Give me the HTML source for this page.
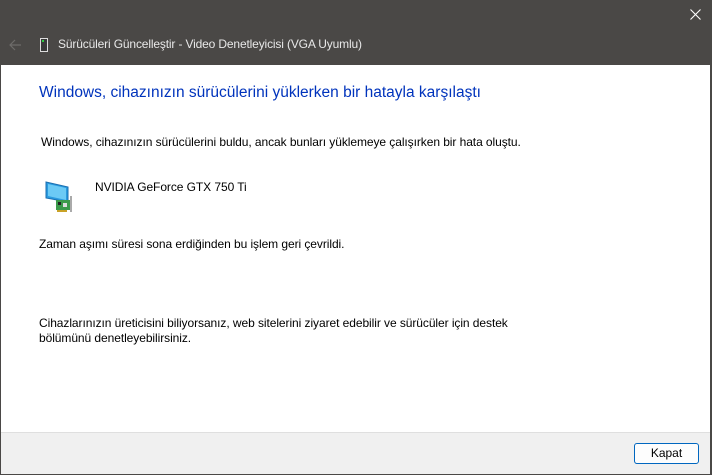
<!DOCTYPE html>
<html><head><meta charset="utf-8"><style>
*{margin:0;padding:0;box-sizing:border-box}
body{width:712px;height:475px;background:#4a4846;position:relative;overflow:hidden;font-family:"Segoe UI","Liberation Sans",sans-serif;font-size:12px;color:#000}
.t{position:absolute;white-space:nowrap;letter-spacing:-0.07px}
#content{position:absolute;left:1px;top:65px;width:709px;height:367px;background:#fff}
#footer{position:absolute;left:1px;top:432px;width:709px;height:42px;background:#f0f0f0;border-top:1px solid #dfdfdf}
#btn{position:absolute;left:634px;top:443px;width:65px;height:21px;border:1px solid #0067c0;border-radius:3px;background:#fdfdfd;text-align:center;line-height:19px;font-size:12px}
</style></head><body>
<svg class="t" style="left:8px;top:38px" width="14" height="14" viewBox="0 0 14 14"><path d="M13 7H2M7 2L2 7l5 5" stroke="#6e6c6a" stroke-width="1.2" fill="none"/></svg>
<svg class="t" style="left:40px;top:38px" width="9" height="14" viewBox="0 0 9 14"><rect x="0.5" y="0.5" width="7" height="13" fill="#3a3a3a" stroke="#ddd"/><rect x="2" y="2" width="2" height="2" fill="#2ecc40"/></svg>
<div class="t" style="left:58px;top:37px;color:#e8e8e8;font-size:12px;letter-spacing:-0.15px">Sürücüleri Güncelleştir - Video Denetleyicisi (VGA Uyumlu)</div>
<svg class="t" style="left:690px;top:9px" width="11" height="11" viewBox="0 0 11 11"><path d="M0.5 0.5l10 10M10.5 0.5l-10 10" stroke="#fff" stroke-width="1.1"/></svg>
<div id="content"></div>
<div class="t" style="left:39px;top:84px;color:#0033bc;font-size:15.5px;letter-spacing:0">Windows, cihazınızın sürücülerini yüklerken bir hatayla karşılaştı</div>
<div class="t" style="left:41px;top:135px">Windows, cihazınızın sürücülerini buldu, ancak bunları yüklemeye çalışırken bir hata oluştu.</div>
<svg class="t" style="left:44px;top:178px" width="30" height="36" viewBox="0 0 30 36"><polygon points="2,4 24,9 24,24 2,20" fill="#2a9be0" stroke="#1b6fb0"/><polygon points="4,6 22,10 22,22 4,18" fill="#6ccaf5"/><rect x="12" y="22" width="14" height="10" fill="#3b9a4a"/><rect x="14" y="24" width="3" height="3" fill="#222"/><rect x="19" y="25" width="4" height="4" fill="#ddd"/><rect x="26" y="18" width="2" height="16" fill="#aaa"/><rect x="13" y="32" width="10" height="2" fill="#c9a227"/></svg>
<div class="t" style="left:95px;top:180px">NVIDIA GeForce GTX 750 Ti</div>
<div class="t" style="left:39px;top:237px">Zaman aşımı süresi sona erdiğinden bu işlem geri çevrildi.</div>
<div class="t" style="left:39px;top:316px">Cihazlarınızın üreticisini biliyorsanız, web sitelerini ziyaret edebilir ve sürücüler için destek</div>
<div class="t" style="left:39px;top:331px">bölümünü denetleyebilirsiniz.</div>
<div id="footer"></div>
<div id="btn">Kapat</div>
</body></html>
